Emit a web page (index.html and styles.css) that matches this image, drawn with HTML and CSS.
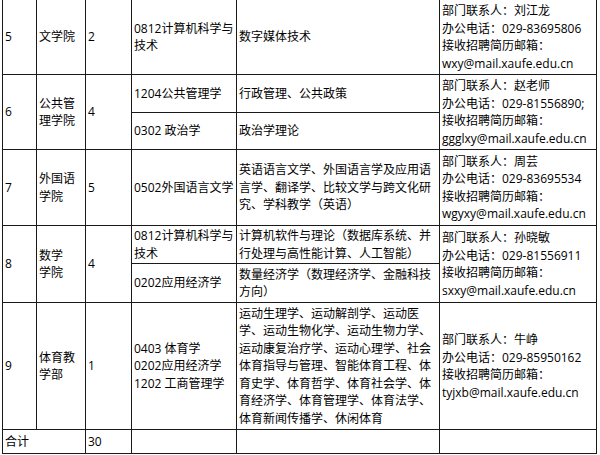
FILE: index.html
```html
<!DOCTYPE html>
<html lang="zh-CN">
<head>
<meta charset="utf-8">
<title>招聘信息表</title>
<link rel="stylesheet" href="styles.css">
</head>
<body>
<table class="grid">
  <colgroup>
    <col class="c-no">
    <col class="c-dept">
    <col class="c-num">
    <col class="c-major">
    <col class="c-field">
    <col class="c-contact">
  </colgroup>
  <tbody>
    <tr class="r5">
      <td>5</td>
      <td>文学院</td>
      <td>2</td>
      <td>0812计算机科学与技术</td>
      <td>数字媒体技术</td>
      <td class="contact">部门联系人：刘江龙<br>办公电话：029-83695806<br>接收招聘简历邮箱：<br>wxy@mail.xaufe.edu.cn</td>
    </tr>
    <tr class="r6a">
      <td rowspan="2">6</td>
      <td rowspan="2">公共管理学院</td>
      <td rowspan="2">4</td>
      <td>1204公共管理学</td>
      <td>行政管理、公共政策</td>
      <td rowspan="2" class="contact">部门联系人：赵老师<br>办公电话：029-81556890;<br>接收招聘简历邮箱：<br>ggglxy@mail.xaufe.edu.cn</td>
    </tr>
    <tr class="r6b">
      <td>0302 政治学</td>
      <td>政治学理论</td>
    </tr>
    <tr class="r7">
      <td>7</td>
      <td>外国语学院</td>
      <td>5</td>
      <td>0502外国语言文学</td>
      <td>英语语言文学、外国语言学及应用语言学、翻译学、比较文学与跨文化研究、学科教学（英语）</td>
      <td class="contact">部门联系人：周芸<br>办公电话：029-83695534<br>接收招聘简历邮箱：<br>wgyxy@mail.xaufe.edu.cn</td>
    </tr>
    <tr class="r8a">
      <td rowspan="2">8</td>
      <td rowspan="2">数学<br>学院</td>
      <td rowspan="2">4</td>
      <td>0812计算机科学与技术</td>
      <td>计算机软件与理论（数据库系统、并行处理与高性能计算、人工智能）</td>
      <td rowspan="2" class="contact">部门联系人：孙晓敏<br>办公电话：029-81556911<br>接收招聘简历邮箱：<br>sxxy@mail.xaufe.edu.cn</td>
    </tr>
    <tr class="r8b">
      <td>0202应用经济学</td>
      <td>数量经济学（数理经济学、金融科技方向）</td>
    </tr>
    <tr class="r9">
      <td>9</td>
      <td>体育教学部</td>
      <td>1</td>
      <td>0403 体育学<br>0202应用经济学<br>1202 工商管理学</td>
      <td>运动生理学、运动解剖学、运动医学、运动生物化学、运动生物力学、运动康复治疗学、运动心理学、社会体育指导与管理、智能体育工程、体育史学、体育哲学、体育社会学、体育经济学、体育管理学、体育法学、体育新闻传播学、休闲体育</td>
      <td class="contact">部门联系人：牛峥<br>办公电话：029-85950162<br>接收招聘简历邮箱：<br>tyjxb@mail.xaufe.edu.cn</td>
    </tr>
    <tr class="rt">
      <td colspan="2">合计</td>
      <td>30</td>
      <td></td>
      <td></td>
      <td></td>
    </tr>
  </tbody>
</table>
</body>
</html>
```

FILE: styles.css
```css
html, body {
  margin: 0;
  padding: 0;
  background: #fff;
}

body {
  font-family: "Open Sans", "Noto Sans CJK SC", sans-serif;
  font-size: 12px;
  line-height: 17.5px;
  color: #000;
}

.grid {
  border-collapse: collapse;
  table-layout: fixed;
  width: 595px;
  margin: -1px 0 0 2px;
}

.c-no { width: 34px; }
.c-dept { width: 49px; }
.c-num { width: 46px; }
.c-major { width: 105px; }
.c-field { width: 203px; }
.c-contact { width: 157px; }

.grid td {
  border: 1px solid #1a1a1a;
  padding: 0 2px;
  vertical-align: middle;
  text-align: left;
  overflow: hidden;
}

.grid td.contact {
  white-space: nowrap;
}

.r5 { height: 75px; }
.r6a { height: 38px; }
.r6b { height: 37px; }
.r7 { height: 76px; }
.r8a { height: 38px; }
.r8b { height: 39px; }
.r9 { height: 127px; }
.rt { height: 24px; }
```
